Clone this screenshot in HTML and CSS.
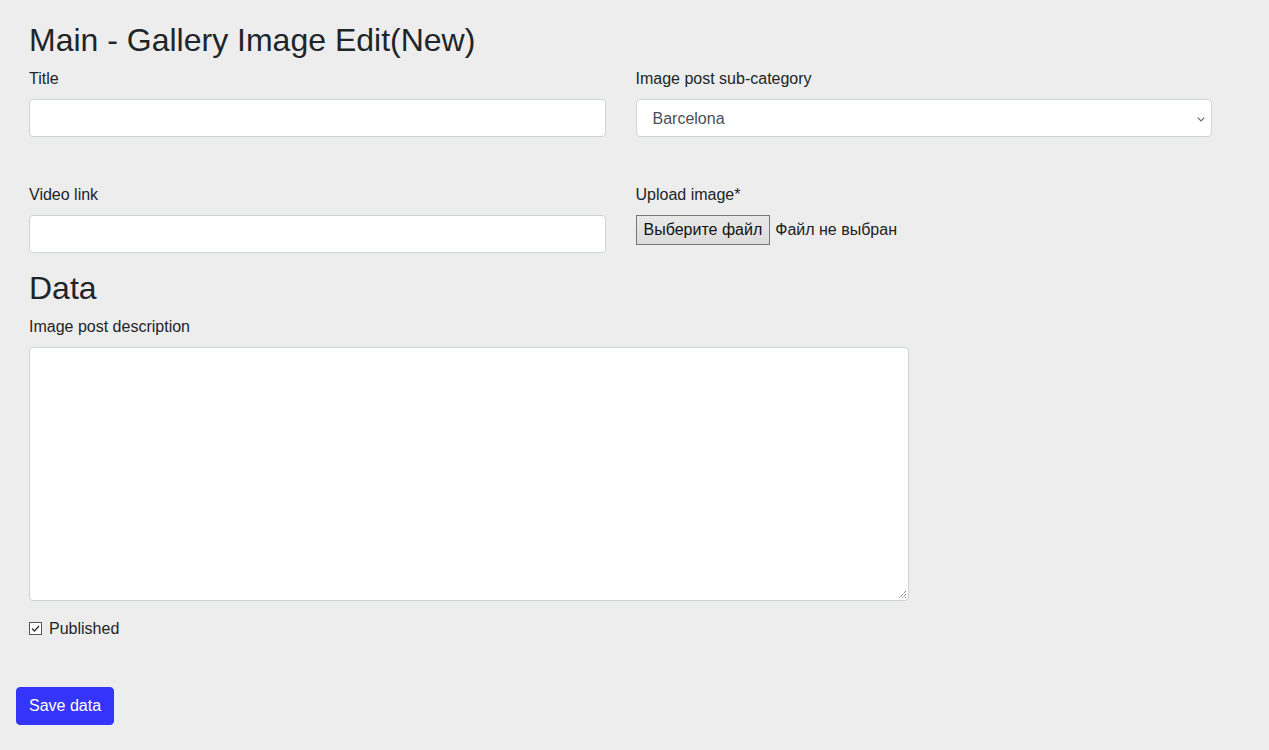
FILE: index.html
```html
<!DOCTYPE html>
<html lang="en">
<head>
<meta charset="utf-8">
<title>Main - Gallery Image Edit(New)</title>
<link rel="stylesheet" href="styles.css">
</head>
<body>
<form class="page">
  <div class="row">
    <div class="col col-12">
      <h1 class="title">Main - Gallery Image Edit(New)</h1>
    </div>
    <div class="col col-6">
      <div class="form-group">
        <label class="label">Title</label>
        <input class="form-control" type="text">
      </div>
    </div>
    <div class="col col-6">
      <div class="form-group">
        <label class="label">Image post sub-category</label>
        <div class="select">
          <span class="select-value">Barcelona</span>
          <svg class="select-arrow" width="8" height="5" viewBox="0 0 8 5"><path d="M0.7 0.7l3.3 3.3 3.3-3.3" fill="none" stroke="#666" stroke-width="1.1"/></svg>
        </div>
      </div>
    </div>
  </div>
  <div class="row row-second">
    <div class="col col-6">
      <div class="form-group">
        <label class="label">Video link</label>
        <input class="form-control" type="text">
      </div>
    </div>
    <div class="col col-6">
      <div class="form-group">
        <label class="label">Upload image*</label>
        <div class="file">
          <span class="file-btn">Выберите файл</span>
          <span class="file-text">Файл не выбран</span>
        </div>
      </div>
    </div>
    <div class="col col-12">
      <h1 class="title title-data">Data</h1>
    </div>
    <div class="col col-9">
      <div class="form-group">
        <label class="label">Image post description</label>
        <div class="textarea">
          <svg class="grip" width="9" height="9" viewBox="0 0 9 9"><path d="M8 1L1 8M8 4L4 8M8 7L7 8" stroke="#444" stroke-width="1" stroke-dasharray="1 1"/></svg>
        </div>
      </div>
    </div>
    <div class="col col-12">
      <div class="check">
        <span class="check-box"><svg width="11" height="11" viewBox="0 0 11 11"><path d="M2 5.5l2.5 2.5 4.5-5" fill="none" stroke="#333" stroke-width="1.4"/></svg></span>
        <span class="check-label">Published</span>
      </div>
    </div>
  </div>
  <div class="actions">
    <button class="btn-save" type="button">Save data</button>
  </div>
</form>
</body>
</html>
```

FILE: styles.css
```css
* { box-sizing: border-box; }
html, body { margin: 0; padding: 0; }
body {
  background: #ededed;
  font-family: "Liberation Sans", Arial, sans-serif;
  font-size: 16px;
  line-height: 1.5;
  color: #212529;
}
.page {
  padding-top: 21px;
}
.row {
  display: flex;
  flex-wrap: wrap;
  width: 1213px;
  margin-left: 14px;
}
.row-second {
  margin-top: 30px;
}
.col {
  padding: 0 15px;
}
.col-12 { width: 100%; }
.col-6 { width: 50%; }
.col-9 { width: 75%; }
.title {
  margin: 0 0 8px;
  font-size: 32px;
  font-weight: 400;
  line-height: 1.2;
}
.title-data {
  margin-bottom: 7px;
}
.form-group {
  margin-bottom: 16px;
}
.label {
  display: block;
  margin-bottom: 8px;
}
.form-control {
  display: block;
  width: 100%;
  height: 38px;
  padding: 6px 12px;
  font: inherit;
  color: #495057;
  background: #fff;
  border: 1px solid #ced4da;
  border-radius: 4px;
}
.select {
  display: flex;
  align-items: center;
  justify-content: space-between;
  height: 38px;
  padding: 1px 6px 0 16px;
  background: #fff;
  border: 1px solid #ced4da;
  border-radius: 4px;
  color: #495057;
}
.select-arrow { margin-top: 1px; }
.file {
  display: flex;
  align-items: center;
  gap: 5px;
}
.file-btn {
  display: inline-block;
  height: 30px;
  padding: 2px 7px;
  line-height: 24px;
  background: linear-gradient(#e9e9e9, #dcdcdc);
  border: 1px solid #767676;
  color: #111;
}
.file-text { color: #222; }
.textarea {
  position: relative;
  height: 254px;
  background: #fff;
  border: 1px solid #ced4da;
  border-radius: 4px;
}
.grip {
  position: absolute;
  right: 1px;
  bottom: 1px;
}
.check {
  display: flex;
  align-items: center;
  gap: 7px;
}
.check-box {
  display: flex;
  align-items: center;
  justify-content: center;
  width: 13px;
  height: 13px;
  border: 1px solid #555;
  background: #fff;
}
.actions {
  margin-top: 46px;
  padding-left: 16px;
}
.btn-save {
  height: 38px;
  padding: 6px 12px;
  font: inherit;
  color: #fff;
  background: #3434fa;
  border: 1px solid #3434fa;
  border-radius: 4px;
}
```
